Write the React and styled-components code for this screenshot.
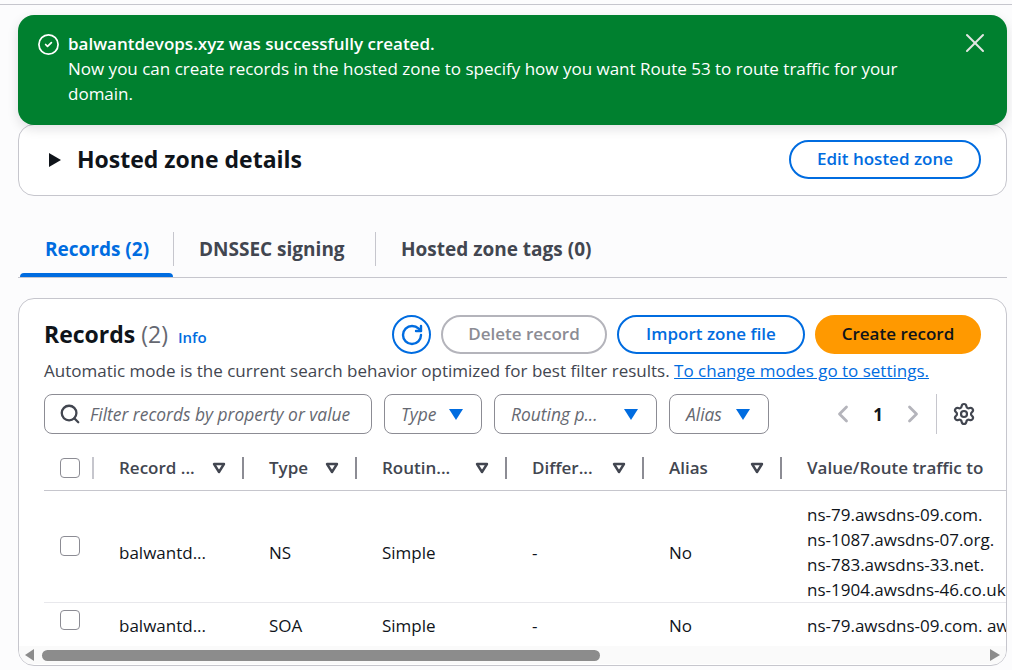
import React from "react";
import styled, { createGlobalStyle } from "styled-components";
import { CircleCheck, X, Search, RotateCw, Settings, ChevronLeft, ChevronRight } from "lucide-react";

const GlobalStyle = createGlobalStyle`
  html, body {
    margin: 0;
    padding: 0;
    height: 100%;
    overflow: hidden;
    background: #fcfcfd;
    font-family: "Open Sans", "Noto Sans", Arial, sans-serif;
    color: #0f141a;
  }
`;

const columns = [
  { label: "Record ...", width: 150, sort: true },
  { label: "Type", width: 113, sort: true },
  { label: "Routin...", width: 150, sort: true },
  { label: "Differ...", width: 137, sort: true },
  { label: "Alias", width: 138, sort: true },
  { label: "Value/Route traffic to", width: 300 },
];

const rows = [
  {
    name: "balwantd...",
    type: "NS",
    values: ["ns-79.awsdns-09.com.", "ns-1087.awsdns-07.org.", "ns-783.awsdns-33.net.", "ns-1904.awsdns-46.co.uk."],
  },
  {
    name: "balwantd...",
    type: "SOA",
    values: ["ns-79.awsdns-09.com. awsdns-hostmaster.amazon.com."],
  },
];

const SortIcon = () => (
  <svg width="14" height="12" viewBox="0 0 14 12">
    <path d="M2 2h10L7 10z" fill="none" stroke="#424650" strokeWidth="2.4" strokeLinejoin="round" />
  </svg>
);

const Caret = () => (
  <svg width="14" height="11" viewBox="0 0 14 11">
    <path d="M0 0h14L7 11z" fill="#006ce0" />
  </svg>
);

const App = () => {
  return (
    <Page>
      <GlobalStyle />
      <TopRule />
      <Content>
        <Flash>
          <CircleCheck size={23} strokeWidth={1.8} />
          <FlashText>
            <strong>balwantdevops.xyz was successfully created.</strong>
            <br />
            Now you can create records in the hosted zone to specify how you want Route 53 to route traffic for your domain.
          </FlashText>
          <CloseButton>
            <X size={32} strokeWidth={1.5} />
          </CloseButton>
        </Flash>

        <DetailsCard>
          <DetailsTitle>
            <svg width="12" height="14" viewBox="0 0 12 14">
              <path d="M0 0l12 7-12 7z" fill="#0f141a" />
            </svg>
            <h2>Hosted zone details</h2>
          </DetailsTitle>
          <PillButton $width={192}>Edit hosted zone</PillButton>
        </DetailsCard>

        <Tabs>
          <Tab $active $width={154}>Records (2)</Tab>
          <Tab $width={202}>DNSSEC signing</Tab>
          <Tab $last>Hosted zone tags (0)</Tab>
        </Tabs>

        <RecordsCard>
          <CardHeader>
            <RecordsTitle>
              <h2>
                Records <span>(2)</span>
              </h2>
              <InfoLink>Info</InfoLink>
            </RecordsTitle>
            <Actions>
              <RefreshButton>
                <RotateCw size={24} strokeWidth={2.4} />
              </RefreshButton>
              <PillButton $width={166} $variant="disabled">Delete record</PillButton>
              <PillButton $width={188}>Import zone file</PillButton>
              <PillButton $width={166} $variant="primary">Create record</PillButton>
            </Actions>
          </CardHeader>

          <Description>
            Automatic mode is the current search behavior optimized for best filter results.{" "}
            <a>To change modes go to settings.</a>
          </Description>

          <FilterRow>
            <SearchBox>
              <Search size={22} strokeWidth={2.5} />
              <span>Filter records by property or value</span>
            </SearchBox>
            <SelectBox $width={98}>
              <span>Type</span>
              <Caret />
            </SelectBox>
            <SelectBox $width={163}>
              <span>Routing p...</span>
              <Caret />
            </SelectBox>
            <SelectBox $width={100}>
              <span>Alias</span>
              <Caret />
            </SelectBox>
            <Pagination>
              <PageArrow>
                <ChevronLeft size={28} strokeWidth={2.4} />
              </PageArrow>
              <PageNumber>1</PageNumber>
              <PageArrow>
                <ChevronRight size={28} strokeWidth={2.4} />
              </PageArrow>
            </Pagination>
            <SettingsCell>
              <Settings size={24} strokeWidth={2.2} />
            </SettingsCell>
          </FilterRow>

          <TableClip>
            <HeaderRow>
              <CheckCell $header>
                <Checkbox />
                <HeaderDivider $light />
              </CheckCell>
              {columns.map((col) => (
                <HeaderCell key={col.label} style={{ width: col.width }}>
                  <span>{col.label}</span>
                  {col.sort && <SortIcon />}
                  {col.sort && <HeaderDivider />}
                </HeaderCell>
              ))}
            </HeaderRow>
            {rows.map((row, i) => (
              <Row key={row.type} $height={i === 0 ? 111 : 43}>
                <CheckCell $offset={i === 0 ? 45 : 7}>
                  <Checkbox />
                </CheckCell>
                <Cell $shift={i === 0 ? 12 : 2} style={{ width: columns[0].width }}>{row.name}</Cell>
                <Cell $shift={i === 0 ? 12 : 2} style={{ width: columns[1].width }}>{row.type}</Cell>
                <Cell $shift={i === 0 ? 12 : 2} style={{ width: columns[2].width }}>Simple</Cell>
                <Cell $shift={i === 0 ? 12 : 2} style={{ width: columns[3].width }}>-</Cell>
                <Cell $shift={i === 0 ? 12 : 2} style={{ width: columns[4].width }}>No</Cell>
                <ValueCell $shift={i === 0 ? 10 : 2}>
                  {row.values.map((v) => (
                    <div key={v}>{v}</div>
                  ))}
                </ValueCell>
              </Row>
            ))}
          </TableClip>

          <ScrollBar>
            <svg width="10" height="12" viewBox="0 0 10 12">
              <path d="M9 0v12L0 6z" fill="#8c8c8c" />
            </svg>
            <ScrollTrack>
              <ScrollThumb />
            </ScrollTrack>
            <svg width="10" height="12" viewBox="0 0 10 12">
              <path d="M0 0v12l10-6z" fill="#8c8c8c" />
            </svg>
          </ScrollBar>
        </RecordsCard>
      </Content>
    </Page>
  );
};

export default App;

const Page = styled.div`
  width: 1012px;
  height: 670px;
  overflow: hidden;
  padding-top: 4px;
  box-sizing: border-box;
`;

const TopRule = styled.div`
  height: 1px;
  background: #c6c6cd;
`;

const Content = styled.div`
  padding: 10px 5px 0 18px;
`;

const Flash = styled.div`
  position: relative;
  z-index: 1;
  display: flex;
  align-items: flex-start;
  height: 110px;
  box-sizing: border-box;
  padding: 16px 16px 0 19px;
  background: #00802f;
  color: #fff;
  border-radius: 16px;
  box-shadow: 0 4px 12px rgba(0, 7, 22, 0.12);

  > svg {
    flex: none;
    margin-top: 2px;
  }
`;

const FlashText = styled.div`
  width: 850px;
  margin-left: 8px;
  font-size: 17px;
  line-height: 25px;

  strong {
    font-weight: 600;
  }
`;

const CloseButton = styled.div`
  display: flex;
  margin: -4px 0 0 auto;
  color: #e4e6e4;
`;

const DetailsCard = styled.div`
  display: flex;
  align-items: center;
  justify-content: space-between;
  height: 72px;
  margin-top: -1px;
  box-sizing: border-box;
  padding: 0 25px 2px 30px;
  background: #fff;
  border: 1px solid #c6c6cd;
  border-radius: 16px;
`;

const DetailsTitle = styled.div`
  display: flex;
  align-items: center;
  gap: 16px;
  margin-top: 2px;

  h2 {
    margin: 0 0 2px;
    font-size: 23px;
    line-height: 30px;
    font-weight: 700;
  }
`;

const PillButton = styled.div`
  display: flex;
  align-items: center;
  justify-content: center;
  flex: none;
  width: ${(p) => p.$width}px;
  height: 39px;
  box-sizing: border-box;
  padding-bottom: 2px;
  border-radius: 20px;
  font-size: 17px;
  font-weight: 600;
  border: 2px solid ${(p) => (p.$variant === "disabled" ? "#b4b4bb" : p.$variant === "primary" ? "#ff9900" : "#006ce0")};
  background: ${(p) => (p.$variant === "primary" ? "#ff9900" : "#fff")};
  color: ${(p) => (p.$variant === "disabled" ? "#8c8c94" : p.$variant === "primary" ? "#0f141a" : "#006ce0")};
`;

const Tabs = styled.div`
  display: flex;
  align-items: flex-start;
  height: 45px;
  margin-top: 36px;
  border-bottom: 1px solid #c6c6cd;
`;

const Tab = styled.div`
  position: relative;
  box-sizing: border-box;
  width: ${(p) => (p.$width ? `${p.$width}px` : "auto")};
  height: 34px;
  line-height: 34px;
  padding-left: 25px;
  font-size: 19px;
  font-weight: 700;
  white-space: nowrap;
  color: ${(p) => (p.$active ? "#006ce0" : "#424650")};
  border-right: ${(p) => (p.$last ? "none" : "1px solid #c6c6cd")};
  margin-left: ${(p) => (p.$active ? "2px" : "0")};

  &::after {
    content: "";
    display: ${(p) => (p.$active ? "block" : "none")};
    position: absolute;
    left: 0;
    right: 0;
    top: 41px;
    height: 4px;
    border-radius: 4px 4px 0 0;
    background: #006ce0;
  }
`;

const RecordsCard = styled.div`
  height: 368px;
  margin-top: 20px;
  box-sizing: border-box;
  padding-top: 16px;
  background: #fff;
  border: 1px solid #c6c6cd;
  border-radius: 16px;
  overflow: hidden;
`;

const CardHeader = styled.div`
  display: flex;
  align-items: center;
  justify-content: space-between;
  height: 39px;
  padding: 0 25px;
`;

const RecordsTitle = styled.div`
  display: flex;
  align-items: baseline;
  gap: 10px;
  margin-bottom: 2px;

  h2 {
    margin: 0;
    font-size: 23px;
    line-height: 30px;
    font-weight: 700;
  }

  span {
    color: #656871;
    font-weight: 400;
  }
`;

const InfoLink = styled.a`
  font-size: 15px;
  font-weight: 600;
  color: #006ce0;
`;

const Actions = styled.div`
  display: flex;
  align-items: center;
  gap: 10px;
`;

const RefreshButton = styled.div`
  display: flex;
  align-items: center;
  justify-content: center;
  width: 39px;
  height: 39px;
  box-sizing: border-box;
  border: 2px solid #006ce0;
  border-radius: 50%;
  color: #006ce0;
`;

const Description = styled.div`
  margin: 4px 0 0 25px;
  font-size: 17px;
  line-height: 26px;
  color: #424650;
  white-space: nowrap;

  a {
    color: #006ce0;
    text-decoration: underline;
  }
`;

const FilterRow = styled.div`
  display: flex;
  align-items: center;
  gap: 12px;
  height: 40px;
  margin-top: 10px;
  padding-left: 25px;
`;

const SearchBox = styled.div`
  display: flex;
  align-items: center;
  gap: 9px;
  width: 328px;
  height: 40px;
  box-sizing: border-box;
  padding-left: 14px;
  border: 1px solid #8c8c94;
  border-radius: 8px;
  font-size: 17.4px;
  font-style: italic;
  color: #656871;
  white-space: nowrap;

  svg {
    color: #424650;
    flex: none;
  }
`;

const SelectBox = styled.div`
  display: flex;
  align-items: center;
  justify-content: space-between;
  width: ${(p) => p.$width}px;
  height: 40px;
  box-sizing: border-box;
  padding: 0 18px 0 16px;
  border: 1px solid #8c8c94;
  border-radius: 8px;
  font-size: 17.4px;
  font-style: italic;
  color: #656871;
`;

const Pagination = styled.div`
  display: flex;
  align-items: center;
  gap: 16px;
  margin-left: 48px;
  color: #b4b4bb;
`;

const PageArrow = styled.div`
  display: flex;
`;

const PageNumber = styled.div`
  width: 10px;
  font-size: 17px;
  font-weight: 700;
  text-align: center;
  color: #0f141a;
`;

const SettingsCell = styled.div`
  display: flex;
  align-items: center;
  height: 40px;
  margin-left: -3px;
  padding-left: 15px;
  border-left: 1px solid #c6c6cd;
  color: #424650;
`;

const TableClip = styled.div`
  margin-top: 16px;
  margin-left: 25px;
  overflow: hidden;
`;

const HeaderRow = styled.div`
  display: flex;
  align-items: center;
  height: 41px;
  width: 1200px;
  box-sizing: border-box;
  padding-bottom: 5px;
  border-bottom: 1px solid #c6c6cd;
`;

const CheckCell = styled.div`
  position: relative;
  flex: none;
  display: flex;
  align-items: ${(p) => (p.$header ? "center" : "flex-start")};
  width: 50px;
  box-sizing: border-box;
  padding-left: 16px;
  padding-top: ${(p) => (p.$offset ? `${p.$offset}px` : "0")};
  height: 100%;
`;

const Checkbox = styled.div`
  width: 20px;
  height: 20px;
  box-sizing: border-box;
  border: 1px solid #8c8c94;
  border-radius: 4px;
  background: #fff;
`;

const HeaderDivider = styled.i`
  position: absolute;
  right: 0;
  top: 50%;
  margin-top: -11px;
  width: 2px;
  height: 22px;
  background: ${(p) => (p.$light ? "#c6c6cd" : "#8c8c94")};
`;

const HeaderCell = styled.div`
  position: relative;
  flex: none;
  display: flex;
  align-items: center;
  justify-content: space-between;
  height: 100%;
  box-sizing: border-box;
  padding: 0 18px 0 25px;
  font-size: 17px;
  font-weight: 600;
  color: #424650;
  white-space: nowrap;
`;

const Row = styled.div`
  display: flex;
  align-items: stretch;
  width: 1200px;
  height: ${(p) => p.$height}px;
  border-bottom: 1px solid #e8e8ec;

  &:last-child {
    border-bottom: none;
  }
`;

const Cell = styled.div`
  flex: none;
  display: flex;
  align-items: center;
  box-sizing: border-box;
  padding-left: 25px;
  padding-top: ${(p) => p.$shift}px;
  font-size: 17px;
  color: #0f141a;
  white-space: nowrap;
`;

const ValueCell = styled(Cell)`
  flex-direction: column;
  align-items: flex-start;
  justify-content: center;
  line-height: 25px;
`;

const ScrollBar = styled.div`
  display: flex;
  align-items: center;
  gap: 7px;
  height: 18px;
  padding: 0 6px;
  background: #fafafa;
`;

const ScrollTrack = styled.div`
  flex: 1;
`;

const ScrollThumb = styled.div`
  width: 558px;
  height: 11px;
  border-radius: 6px;
  background: #8c8c8c;
`;
